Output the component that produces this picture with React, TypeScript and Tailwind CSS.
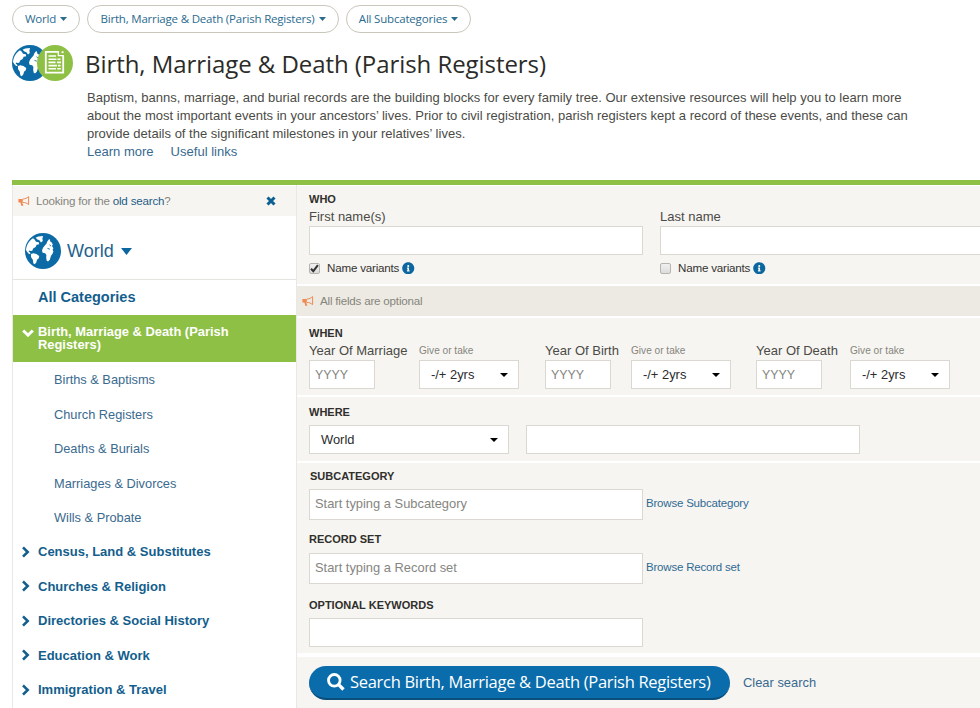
import { ReactNode } from "react";
import { FaInfoCircle } from "react-icons/fa";

const HUMANIST = "font-['Open_Sans','Noto_Sans',sans-serif]";

const subcategories = [
  "Births & Baptisms",
  "Church Registers",
  "Deaths & Burials",
  "Marriages & Divorces",
  "Wills & Probate",
];

const categories = [
  "Census, Land & Substitutes",
  "Churches & Religion",
  "Directories & Social History",
  "Education & Work",
  "Immigration & Travel",
];

function Caret({ className }: { className: string }) {
  return (
    <svg viewBox="0 0 10 6" preserveAspectRatio="none" className={className}>
      <path d="M0 0h10L5 6z" fill="currentColor" />
    </svg>
  );
}

function Bullhorn() {
  return (
    <svg viewBox="0 0 12 12" className="size-3 text-[#ee8a52]">
      <path d="M.4 4h4.400v3.400h-.6l1.200 3.200-1.900.4-1.100-3.600h-2z" fill="currentColor" />
      <path d="M4.800 4.100C7.200 3.900 9 3 10.600 1.600v8C9 8.200 7.200 7.500 4.800 7.300" fill="none" stroke="currentColor" />
    </svg>
  );
}

function Globe({ className }: { className: string }) {
  return (
    <svg viewBox="0 0 36 36" className={className}>
      <circle cx="18" cy="18" r="18" fill="#0c6ba6" />
      <g fill="#fff">
        <path d="M1 17C1.400 12 4 7.600 8 5.200l1.600 1.200 1.400 2.400 2.800.4.4 2-2.600.6-1 2.200-2.400 1.400-1 2.400-1.600.2-1.200-.6-.8 1.400 1.400.8.6 1.600-1.800-.4-1.600-1.800z" />
        <path d="M10.600 4.800l2.600-1.200 4.800-.6-.6 2.800.4 2.200-1.800 1.600-1.600-2.400-2-.8z" />
        <path d="M6 21l2.400-.8 3 .8 2.800 2-.4 2.200-1.800 1.600-.6 2.400-1.600 2-1.400-.8-.6-3.600-1.800-2.800z" />
        <path d="M20 12.200l1.400-1.400 1-2.600 1.600-2 1 .4.2 2 1.400.6 1.200 2.400-.8 1.400 1.400 2.200-.8 1.600.8 1.600-1 2.600-1.400 1.800-1.200 4-1.800 1.600-1.400-.8-.4-3 .2-2.600-1.200-1.800-2.600-.4-.6-2.400 1-2.600z" />
      </g>
      <path d="M22.500 15.400l2.400.8m-.4-4.400l1.600 1.400" stroke="#0c6ba6" strokeWidth="0.900" />
    </svg>
  );
}

function DocumentBadge() {
  return (
    <svg viewBox="0 0 36 36" className="-ml-[11px] size-9">
      <circle cx="18" cy="18" r="18" fill="#8ec045" />
      <path d="M21.500 6.800H8.800v20.800h17.400V11" fill="none" stroke="#fff" strokeWidth="1.800" />
      <path d="M21.300 6v4.600h5.600" fill="none" stroke="#fff" strokeWidth="1.300" />
      <path d="M24.600 6.300h2v1.800h-2z" fill="#fff" />
      <path
        d="M11.500 11h7.500M11.500 14.200h8m1 0h3M11.500 17.400h7m1.500 0h4M11.500 20.600h8.500m1 0h2.500M11.500 23.800h7.500m1.200 0h3.600"
        stroke="#fff"
        strokeWidth="1.600"
      />
    </svg>
  );
}

function Chevron({ down }: { down?: boolean }) {
  return (
    <svg viewBox="0 0 12 12" className="size-3 shrink-0">
      <path
        d={down ? "M1.200 3.500L6 8.200l4.800-4.700" : "M2 1.300L6.700 6 2 10.700"}
        fill="none"
        stroke="currentColor"
        strokeWidth={down ? 3 : 2.6}
      />
    </svg>
  );
}

function Pill({ children, className }: { children: ReactNode; className: string }) {
  return (
    <button
      className={`flex h-[28px] items-center justify-center gap-1 rounded-full border border-[#c9c6bb] bg-white pb-px text-[11.5px] tracking-[-0.19px] whitespace-nowrap text-[#2a6b8f] ${HUMANIST} ${className}`}
    >
      <span>{children}</span>
      <Caret className="h-1 w-[7px]" />
    </button>
  );
}

function SectionTitle({ children }: { children: ReactNode }) {
  return <h3 className="text-[11px] leading-[14px] font-bold text-[#2f2f2b]">{children}</h3>;
}

function TextInput({ className, placeholder }: { className: string; placeholder?: string }) {
  return (
    <input
      type="text"
      placeholder={placeholder}
      className={`block border border-[#dad8d1] bg-white px-[5px] placeholder:text-[#85857f] ${className}`}
    />
  );
}

function Dropdown({ children, className }: { children: ReactNode; className: string }) {
  return (
    <button
      className={`flex h-[29px] items-center justify-between border border-[#dad8d1] bg-white pr-[10px] pl-[11px] text-[12.9px] text-[#2b2b2b] ${className}`}
    >
      <span>{children}</span>
      <Caret className="h-1 w-[8px] text-black" />
    </button>
  );
}

function NameVariants({ checked }: { checked?: boolean }) {
  return (
    <label className="mt-[6px] flex h-[14px] items-center text-[11.6px] tracking-[-0.2px] text-[#33332f]">
      <span className="flex size-[11px] items-center justify-center rounded-[2px] border border-[#b4b4b0] bg-linear-to-b from-[#f0f0f0] to-[#dcdcdc]">
        {checked && (
          <svg viewBox="0 0 9 9" className="size-[9px]">
            <path d="M1 4.700l2.300 2.500L7.900 1.200" fill="none" stroke="#333" strokeWidth="2" />
          </svg>
        )}
      </span>
      <span className="ml-[7px]">Name variants</span>
      <FaInfoCircle className="ml-[3px] size-[12.5px] text-[#0c67a0]" />
    </label>
  );
}

function YearField({ label, className }: { label: string; className: string }) {
  return (
    <div className={`shrink-0 ${className}`}>
      <div className="text-[13px] leading-[18px] whitespace-nowrap text-[#4a4a46]">{label}</div>
      <TextInput placeholder="YYYY" className="h-[29px] w-[66px] text-[12.4px]" />
    </div>
  );
}

function GiveOrTake() {
  return (
    <div className="w-[100px] shrink-0">
      <div className="text-[10.100px] leading-[18px] text-[#85857c]">Give or take</div>
      <Dropdown className="w-[100px]">-/+ 2yrs</Dropdown>
    </div>
  );
}

function BrowseField({ placeholder, link }: { placeholder: string; link: string }) {
  return (
    <div className="flex items-center gap-[3px]">
      <TextInput placeholder={placeholder} className="h-[31px] w-[334px] pb-[2px] text-[12.9px]" />
      <a className="pb-[2px] text-[11.5px] tracking-[-0.2px] text-[#2f6a93]">{link}</a>
    </div>
  );
}

function Header() {
  return (
    <header className="h-[180px] pt-[5px] pl-3">
      <div className="flex">
        <Pill className="w-[68px]">World</Pill>
        <Pill className="ml-[7px] w-[252px]">Birth, Marriage &amp; Death (Parish Registers)</Pill>
        <Pill className="ml-[7px] w-[125px]">All Subcategories</Pill>
      </div>
      <div className="mt-3 flex">
        <div className="flex w-[73px] shrink-0">
          <Globe className="size-9" />
          <DocumentBadge />
        </div>
        <div>
          <h1
            className={`h-9 text-[24px] leading-[38px] tracking-[-0.06px] whitespace-nowrap text-[#2b2b28] ${HUMANIST}`}
          >
            Birth, Marriage &amp; Death (Parish Registers)
          </h1>
          <div className="mt-[8px] ml-[2px] text-[13px] leading-[18px] tracking-[0.012px] whitespace-nowrap text-[#4b4b46]">
            <p>
              Baptism, banns, marriage, and burial records are the building blocks for every family tree. Our extensive
              resources will help you to learn more
            </p>
            <p>
              about the most important events in your ancestors’ lives. Prior to civil registration, parish registers
              kept a record of these events, and these can
            </p>
            <p>provide details of the significant milestones in your relatives’ lives.</p>
            <div className="flex gap-[17px] text-[#38698f]">
              <a>Learn more</a>
              <a>Useful links</a>
            </div>
          </div>
        </div>
      </div>
    </header>
  );
}

function Sidebar() {
  return (
    <aside className="w-[285px] shrink-0 border-x border-[#e9e8e4] pt-px">
      <div className="flex h-[30px] items-center bg-[#f7f5f2] pr-[20px] pl-[5px] text-[11.6px] tracking-[-0.2px] text-[#85857c]">
        <Bullhorn />
        <span className="ml-[6px] flex-1">
          Looking for the <a className="text-[#1f5d85]">old search</a>?
        </span>
        <svg viewBox="0 0 10 10" className="size-[10px]">
          <path d="M1.500 1.500l7 7m0-7l-7 7" stroke="#0c5f92" strokeWidth="3" />
        </svg>
      </div>
      <div className="flex h-[64px] items-center border-b border-[#e4e4e0] pt-[7px] pl-3 text-[#24628c]">
        <Globe className="size-9" />
        <span className="ml-[6px] text-[18px]">World</span>
        <Caret className="ml-[7px] h-[7px] w-[11px] text-[#0c67a0]" />
      </div>
      <div className="h-[35px] pl-[25px] text-[14.5px] leading-[34px] font-bold text-[#135e8d]">All Categories</div>
      <div className="flex h-[47px] bg-[#8ec045] pt-[10px] pl-[9px] text-[12.9px] leading-[13px] font-bold text-white">
        <span className="mt-[2px]">
          <Chevron down />
        </span>
        <span className="ml-[4px]">
          Birth, Marriage &amp; Death (Parish
          <br />
          Registers)
        </span>
      </div>
      <ul className="text-[12.8px] text-[#3a6a8e]">
        {subcategories.map((item) => (
          <li key={item} className="h-[34.5px] pl-[41px] leading-[35px]">
            {item}
          </li>
        ))}
      </ul>
      <ul className="text-[13px] font-bold text-[#135e8d]">
        {categories.map((item) => (
          <li key={item} className="flex h-[34.5px] items-center pl-[8px]">
            <Chevron />
            <span className="ml-[5px]">{item}</span>
          </li>
        ))}
      </ul>
    </aside>
  );
}

function SearchForm() {
  return (
    <main className="flex w-[683px] flex-col gap-[2px] pt-px">
      <section className="h-[98px] bg-[#f7f5f2] pt-[6px] pl-[12px]">
        <SectionTitle>WHO</SectionTitle>
        <div className="flex gap-[17px]">
          <div>
            <div className="mt-[2px] h-[18px] text-[13px] leading-[18px] text-[#4a4a46]">First name(s)</div>
            <TextInput className="h-[29px] w-[334px]" />
            <NameVariants checked />
          </div>
          <div>
            <div className="mt-[2px] h-[18px] text-[13px] leading-[18px] text-[#4a4a46]">Last name</div>
            <TextInput className="h-[29px] w-[334px]" />
            <NameVariants />
          </div>
        </div>
      </section>

      <section className="flex h-[30px] items-center bg-[#edeae3] pl-[5px] text-[11.6px] tracking-[-0.2px] text-[#85857c]">
        <Bullhorn />
        <span className="ml-[6px]">All fields are optional</span>
      </section>

      <section className="h-[77px] bg-[#f7f5f2] pt-[8px] pl-[12px]">
        <SectionTitle>WHEN</SectionTitle>
        <div className="mt-[2px] flex">
          <YearField label="Year Of Marriage" className="w-[110px]" />
          <GiveOrTake />
          <YearField label="Year Of Birth" className="ml-[26px] w-[86px]" />
          <GiveOrTake />
          <YearField label="Year Of Death" className="ml-[25px] w-[94px]" />
          <GiveOrTake />
        </div>
      </section>

      <section className="h-[64px] bg-[#f7f5f2] pt-[8px] pl-[12px]">
        <SectionTitle>WHERE</SectionTitle>
        <div className="mt-[6px] flex gap-[17px]">
          <Dropdown className="w-[200px]">World</Dropdown>
          <TextInput className="h-[29px] w-[334px]" />
        </div>
      </section>

      <section className="h-[190px] bg-[#f7f5f2] pt-[6px] pl-[12px]">
        <div className="mb-[6px] pl-px">
          <SectionTitle>SUBCATEGORY</SectionTitle>
        </div>
        <BrowseField placeholder="Start typing a Subcategory" link="Browse Subcategory" />
        <div className="mt-[12px] mb-[7px]">
          <SectionTitle>RECORD SET</SectionTitle>
        </div>
        <BrowseField placeholder="Start typing a Record set" link="Browse Record set" />
        <div className="mt-[14px]">
          <SectionTitle>OPTIONAL KEYWORDS</SectionTitle>
        </div>
        <TextInput className="mt-[6px] h-[29px] w-[334px]" />
      </section>

      <section className="mt-[2px] flex h-[51px] items-start bg-[#f7f5f2] pt-[9px] pl-[12px]">
        <button
          className={`flex h-[34px] w-[421px] items-center rounded-full border-b-2 border-[#0a4f7c] bg-[#0a6caa] pl-[18px] text-[16.5px] font-medium tracking-[-0.3px] whitespace-nowrap text-white ${HUMANIST}`}
        >
          <svg viewBox="0 0 18 18" className="size-[18px] shrink-0">
            <circle cx="7.300" cy="7.300" r="5.800" fill="none" stroke="#fff" strokeWidth="2.800" />
            <path d="M11.600 11.600l4.900 4.900" stroke="#fff" strokeWidth="3.400" />
          </svg>
          <span className="ml-[5px]">Search Birth, Marriage &amp; Death (Parish Registers)</span>
        </button>
        <a className="ml-[13px] text-[12.9px] leading-[33px] text-[#38698f]">Clear search</a>
      </section>
    </main>
  );
}

export default function App() {
  return (
    <div className="h-[708px] w-[980px] overflow-hidden bg-white font-['Liberation_Sans',Arial,sans-serif]">
      <Header />
      <div className="ml-3 h-[5px] bg-[#8ec045]" />
      <div className="ml-3 flex h-[523px] overflow-hidden">
        <Sidebar />
        <SearchForm />
      </div>
    </div>
  );
}
